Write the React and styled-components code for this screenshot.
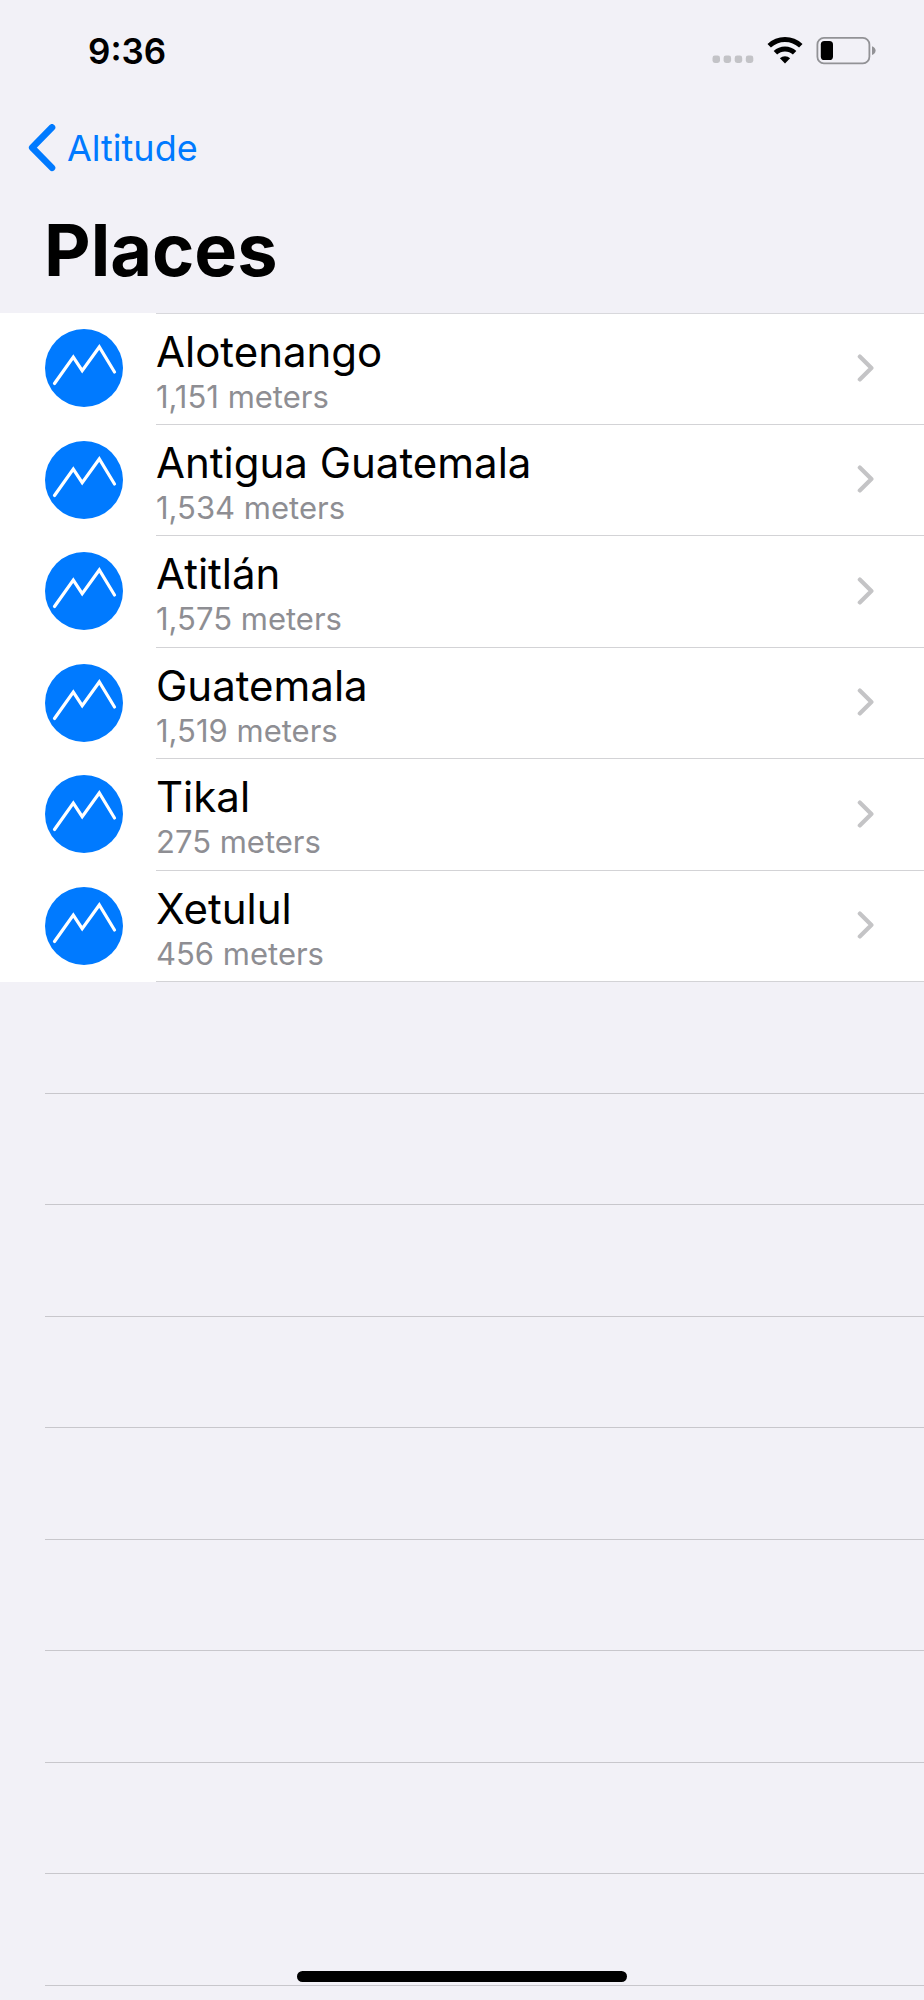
import styled, { createGlobalStyle } from 'styled-components'


const places = [
    { name: 'Alotenango', altitude: '1,151 meters' },
    { name: 'Antigua Guatemala', altitude: '1,534 meters' },
    { name: 'Atitlán', altitude: '1,575 meters' },
    { name: 'Guatemala', altitude: '1,519 meters' },
    { name: 'Tikal', altitude: '275 meters' },
    { name: 'Xetulul', altitude: '456 meters' },
]

const emptyRows = [1, 2, 3, 4, 5, 6, 7, 8, 9]


const App = () => {

    return (
        <Screen>
            <GlobalStyle />

            <StatusBar>
                <Time>9:36</Time>
                <StatusIcons>
                    <Signal />
                    <Wifi />
                    <Battery />
                </StatusIcons>
            </StatusBar>

            <NavBar>
                <BackLink href='#altitude'>
                    <BackIcon />
                    Altitude
                </BackLink>
            </NavBar>

            <Title>Places</Title>

            <List>
                {
                    places.map((item) => <Place key={item.name} name={item.name} altitude={item.altitude} />)
                }
            </List>

            <EmptyList>
                {
                    emptyRows.map((item) => <EmptyRow key={item} />)
                }
            </EmptyList>

            <HomeBar />
        </Screen>
    )

}


const Place = ({ name, altitude }) => (
    <Row>
        <RowLink href='#place'>
            <Mountain />
            <RowBody>
                <Texts>
                    <Name>{name}</Name>
                    <Altitude>{altitude}</Altitude>
                </Texts>
                <Chevron />
            </RowBody>
        </RowLink>
    </Row>
)


const Mountain = () => (
    <svg width='78' height='80' viewBox='0 0 78 80' fill='none' aria-hidden='true'>
        <circle cx='39' cy='39' r='39' fill='#007aff' />
        <path d='M9.5 54.5L28.3 28L37.2 41.6L54.3 18L69.5 43' stroke='#fff' strokeWidth='3.2' strokeLinecap='round' strokeLinejoin='miter' />
    </svg>
)

const Chevron = () => (
    <svg width='17' height='30' viewBox='0 0 17 30' fill='none' aria-hidden='true'>
        <path d='M2.8 2.6L14.4 14L2.8 25.4' stroke='#c4c4c6' strokeWidth='4.2' strokeLinecap='round' strokeLinejoin='round' />
    </svg>
)

const BackIcon = () => (
    <svg width='28' height='48' viewBox='0 0 28 48' fill='none' aria-hidden='true'>
        <path d='M24 3.4L4.2 23.6L24 43.8' stroke='#007aff' strokeWidth='6.6' strokeLinecap='round' strokeLinejoin='round' />
    </svg>
)

const Signal = () => (
    <svg width='42' height='28' viewBox='0 0 42 28' fill='#c3c3c7' aria-hidden='true'>
        <rect x='0.5' y='18.5' width='7.5' height='7.5' rx='2.4' />
        <rect x='11.6' y='18.5' width='7.5' height='7.5' rx='2.4' />
        <rect x='22.7' y='18.5' width='7.5' height='7.5' rx='2.4' />
        <rect x='33.8' y='18.5' width='7.5' height='7.5' rx='2.4' />
    </svg>
)

const Wifi = () => (
    <svg width='36' height='28' viewBox='0 0 36 28' fill='none' aria-hidden='true'>
        <path d='M2.2 8.8A23 23 0 0 1 33.8 8.8' stroke='#000' strokeWidth='5' />
        <path d='M8.4 15.8A13.9 13.9 0 0 1 27.6 15.8' stroke='#000' strokeWidth='5' />
        <path d='M18 26.6L12.9 21.2A7.6 7.6 0 0 1 23.1 21.2Z' fill='#000' />
    </svg>
)

const Battery = () => (
    <svg width='60' height='28' viewBox='0 0 60 28' fill='none' aria-hidden='true'>
        <rect x='1.4' y='0.9' width='52' height='25.4' rx='6.5' stroke='#929296' strokeWidth='1.8' />
        <path d='M56 9.2C58.2 9.8 59.6 11.6 59.6 13.6C59.6 15.6 58.2 17.4 56 18Z' fill='#929296' />
        <rect x='4.8' y='4' width='12.2' height='19' rx='3.6' fill='#000' />
    </svg>
)


const GlobalStyle = createGlobalStyle`
    body{
        margin: 0;
        background-color: #f2f1f7;
        font-family: Inter, 'Liberation Sans', sans-serif;
    }
`

const Screen = styled.main`
    display: flex;
    flex-direction: column;
    color: black;
`

const StatusBar = styled.div`
    display: flex;
    align-items: center;
    justify-content: space-between;
    height: 102px;
    padding: 0 48px 0 88px;
`

const Time = styled.span`
    font-size: 35px;
    font-weight: 600;
`

const StatusIcons = styled.div`
    display: flex;
    align-items: center;
    gap: 13px;
`

const NavBar = styled.nav`
    display: flex;
    align-items: center;
    height: 92px;
    padding: 0 28px;
`

const BackLink = styled.a`
    display: flex;
    align-items: center;
    gap: 11px;
    color: #007aff;
    font-size: 36px;
    text-decoration: none;
`

const Title = styled.h1`
    margin: 0;
    padding: 0 44px 7px;
    font-size: 72px;
    font-weight: 700;
    line-height: 112px;
`

const List = styled.ul`
    margin: 0;
    padding: 0;
    list-style: none;
    background-color: white;
`

const Row = styled.li`
    height: 112px;

    &:nth-child(even){
        height: 111px;
    }
`

const RowLink = styled.a`
    display: flex;
    align-items: center;
    gap: 33px;
    height: 100%;
    padding-left: 45px;
    color: inherit;
    text-decoration: none;
`

const RowBody = styled.div`
    flex: 1;
    display: flex;
    align-items: center;
    justify-content: space-between;
    box-sizing: border-box;
    height: 100%;
    padding-right: 50px;
    border-bottom: 1px solid #d3d3d6;

    ${Row}:first-child &{
        border-top: 1px solid #d8d8dc;
    }
`

const Texts = styled.div`
    display: flex;
    flex-direction: column;
    padding-top: 5px;
`

const Name = styled.span`
    font-size: 42px;
    line-height: 50px;
`

const Altitude = styled.span`
    color: #8e8e93;
    font-size: 31px;
    line-height: 40px;
`

const EmptyList = styled.div`
    padding: 0 0 14px 45px;
`

const EmptyRow = styled.div`
    box-sizing: border-box;
    height: 112px;
    border-bottom: 1px solid #c8c7cc;

    &:nth-child(even){
        height: 111px;
    }
`

const HomeBar = styled.div`
    position: fixed;
    bottom: 18px;
    left: 50%;
    width: 330px;
    height: 11px;
    margin-left: -165px;
    border-radius: 6px;
    background-color: black;
`

export default App
